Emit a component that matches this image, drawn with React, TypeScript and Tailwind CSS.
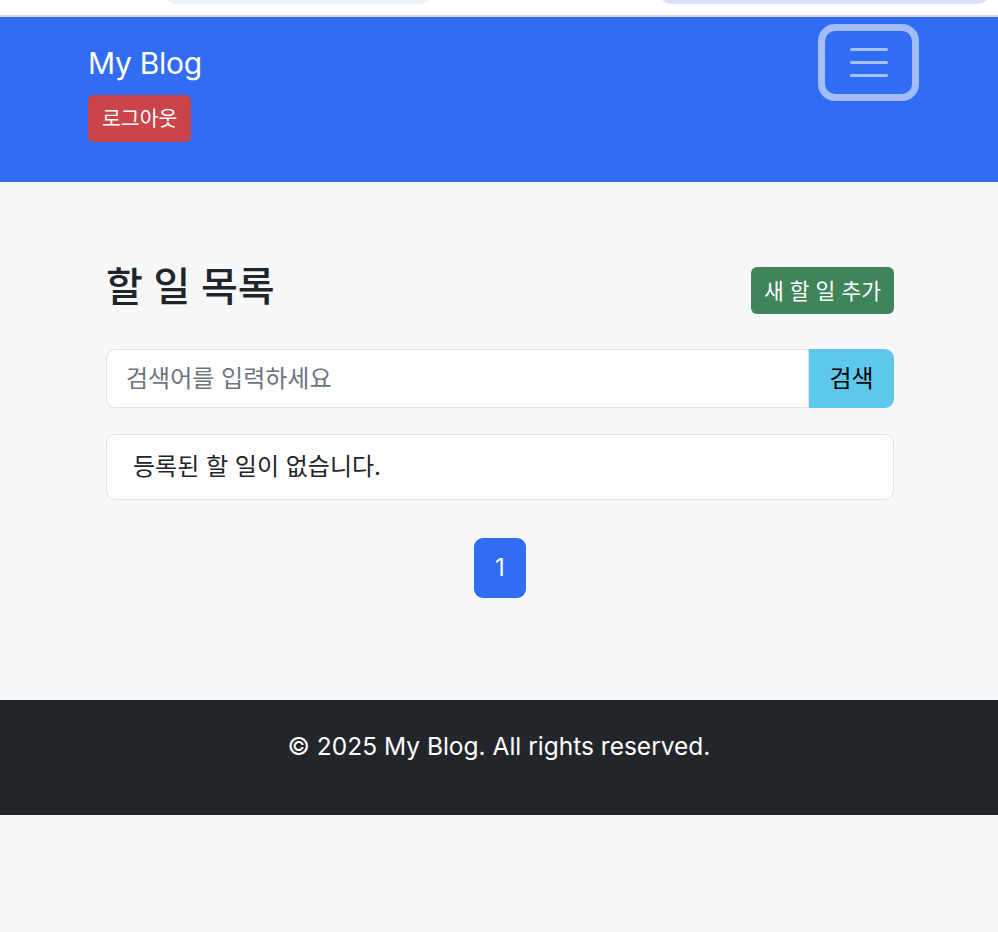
import React from "react";

const font = "font-['Inter','Noto_Sans_CJK_KR',sans-serif]";

function TopStrip() {
  return (
    <div className="h-[15px] bg-white overflow-hidden flex border-b-2 border-[#d9d9d9] box-content">
      <div className="ml-[163px] w-[270px] h-[30px] -mt-[26px] rounded-[14px] bg-[#edf2fb]" />
      <div className="ml-[225px] w-[333px] h-[30px] -mt-[26px] rounded-[14px] bg-[#d6e2fa]" />
    </div>
  );
}

function Header() {
  return (
    <header className="bg-[#316cf4] h-[165px] flex justify-between pl-[88px] pr-[79px]">
      <div className="flex flex-col items-start pt-[24px]">
        <a className="text-white text-[30px] leading-[45px] tracking-[-0.3px]">My Blog</a>
        <button className="mt-[9px] h-[47px] px-[14px] rounded-[6px] bg-[#cb444a] text-white text-[20.5px] leading-[28px]">
          로그아웃
        </button>
      </div>
      <div className="pt-[7px]">
        <button className="w-[101px] h-[77px] border-[7px] border-[#a3bdfa] rounded-[17px] flex flex-col items-center justify-center gap-[10px]">
          <span className="block w-[38px] h-[3px] rounded-full bg-[#a8c0f9]" />
          <span className="block w-[38px] h-[3px] rounded-full bg-[#a8c0f9]" />
          <span className="block w-[38px] h-[3px] rounded-full bg-[#a8c0f9]" />
        </button>
      </div>
    </header>
  );
}

export default function App() {
  return (
    <div className={`min-h-screen bg-[#f7f8fa] ${font}`}>
      <TopStrip />
      <Header />
      <main className="h-[518px] pl-[106px] pr-[104px] pt-[79px]">
        <div className="flex justify-between items-start">
          <h2 className="text-[40px] leading-[48px] font-medium text-[#212529] pt-[2px]">할 일 목록</h2>
          <button className="mt-[6px] h-[47px] px-[13px] rounded-[6px] bg-[#40855a] text-white text-[21.5px] leading-[28px]">
            새 할 일 추가
          </button>
        </div>
        <div className="mt-[35px] flex h-[59px]">
          <input
            className="flex-1 h-full border-[1.5px] border-[#dee2e6] rounded-l-[9px] bg-white px-[19px] text-[24px] text-[#212529] placeholder:text-[#6c757d] outline-none"
            placeholder="검색어를 입력하세요"
          />
          <button className="w-[85px] h-full rounded-r-[9px] bg-[#5dc8ec] text-black text-[24px]">검색</button>
        </div>
        <div className="mt-[26px] h-[66px] border-[1.5px] border-[#dee2e6] rounded-[9px] bg-white flex items-center pl-[26px] text-[24px] text-[#212529]">
          등록된 할 일이 없습니다.
        </div>
        <div className="mt-[38px] flex justify-center">
          <a className="w-[52px] h-[60px] rounded-[9px] bg-[#316cf4] text-white text-[24px] flex items-center justify-center">1</a>
        </div>
      </main>
      <footer className="h-[115px] bg-[#222529] flex items-center justify-center text-white text-[24.5px] pb-[22px]">
        © 2025 My Blog. All rights reserved.
      </footer>
    </div>
  );
}
